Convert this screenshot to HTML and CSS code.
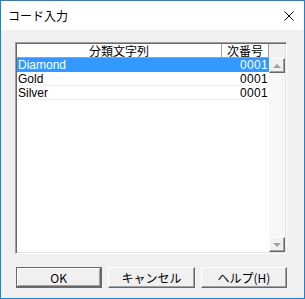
FILE: index.html
```html
<!DOCTYPE html>
<html lang="ja">
<head>
    <meta charset="UTF-8">
    <title>コード入力</title>
    <link rel="stylesheet" href="styles.css">
</head>
<body>
    <div class="window">
        <div class="titlebar">
            <span class="title">コード入力</span>
            <svg class="close" width="10" height="10" viewBox="0 0 10 10">
                <path d="M0.5 0.5 L9.5 9.5 M9.5 0.5 L0.5 9.5" stroke="#000" stroke-width="1" fill="none"/>
            </svg>
        </div>
        <div class="content">
            <div class="listbox">
                <div class="header">
                    <div class="col-name">分類文字列</div>
                    <div class="col-num">次番号</div>
                    <div class="col-rest"></div>
                </div>
                <div class="body">
                    <div class="rows">
                        <div class="row selected"><span>Diamond</span><span class="num">0001</span></div>
                        <div class="row"><span>Gold</span><span class="num">0001</span></div>
                        <div class="row"><span>Silver</span><span class="num">0001</span></div>
                    </div>
                    <div class="scrollbar">
                        <div class="sb-btn"><span class="arrow up"></span></div>
                        <div class="sb-track"></div>
                        <div class="sb-btn"><span class="arrow down"></span></div>
                    </div>
                </div>
            </div>
            <div class="buttons">
                <button class="btn default">OK</button>
                <button class="btn">キャンセル</button>
                <button class="btn">ヘルプ(H)</button>
            </div>
        </div>
    </div>
</body>
</html>
```

FILE: styles.css
```css
* {
    margin: 0;
    padding: 0;
    box-sizing: border-box;
}

body {
    width: 305px;
    height: 299px;
    font-family: "Liberation Sans", "Noto Sans CJK JP", sans-serif;
    font-size: 12px;
    color: #000;
    overflow: hidden;
}

.window {
    width: 305px;
    height: 299px;
    border: 1px solid #1883d7;
    display: flex;
    flex-direction: column;
}

.titlebar {
    height: 29px;
    background: #fff;
    display: flex;
    align-items: center;
    justify-content: space-between;
    padding: 0 10px 0 7px;
}

.title {
    font-family: "Noto Sans CJK JP", sans-serif;
    font-size: 12px;
}

.close {
    display: block;
}

.content {
    flex: 1;
    background: #f0f0f0;
    padding: 12px 17px 0 14px;
}

/* list view */
.listbox {
    height: 212px;
    border: 1px solid;
    border-color: #a0a0a0 #fff #fff #a0a0a0;
    box-shadow: inset 1px 1px 0 #696969, inset -1px -1px 0 #e3e3e3;
    padding: 1px;
    display: flex;
    flex-direction: column;
    background: #fff;
}

.header {
    display: flex;
    height: 14px;
    line-height: 13px;
    font-family: "Noto Sans CJK JP", sans-serif;
    background: #fff;
}

.col-name {
    width: 205px;
    text-align: center;
    border-right: 1px solid #a0a0a0;
    border-bottom: 1px solid #a0a0a0;
}

.col-num {
    width: 47px;
    text-align: center;
    border-right: 1px solid #a0a0a0;
    border-bottom: 1px solid #a0a0a0;
}

.col-rest {
    flex: 1;
    background: #f0f0f0;
}

.body {
    flex: 1;
    display: flex;
}

.rows {
    flex: 1;
    background-color: #fff;
    background-image: radial-gradient(circle, #e8e8e8 0.5px, transparent 0.7px);
    background-size: 4px 4px;
    background-position: 1px 1px;
}

.row {
    display: flex;
    justify-content: space-between;
    height: 14px;
    line-height: 14px;
    padding: 0 1px 0 1px;
    background: #fff;
    border-bottom: 1px solid #f0f0f0;
}

.row.selected {
    background: #3399ff;
    color: #fff;
    border-bottom-color: #3399ff;
}

.num {
    letter-spacing: 0.3px;
}

/* scrollbar */
.scrollbar {
    width: 16px;
    display: flex;
    flex-direction: column;
}

.sb-track {
    flex: 1;
    background-image: conic-gradient(#fff 25%, #f0f0f0 0 50%, #fff 0 75%, #f0f0f0 0);
    background-size: 2px 2px;
}

.sb-btn {
    height: 15px;
    background: #f0f0f0;
    border: 1px solid;
    border-color: #fff #696969 #696969 #fff;
    box-shadow: inset -1px -1px 0 #a0a0a0;
    display: flex;
    align-items: center;
    justify-content: center;
}

.arrow {
    width: 0;
    height: 0;
    border-left: 4px solid transparent;
    border-right: 4px solid transparent;
}

.arrow.up {
    border-bottom: 4px solid #a0a0a0;
}

.arrow.down {
    border-top: 4px solid #a0a0a0;
}

/* buttons */
.buttons {
    display: flex;
    gap: 6px;
    margin-top: 13px;
    padding-left: 1px;
}

.btn {
    width: 87px;
    height: 21px;
    font-family: "Noto Sans CJK JP", sans-serif;
    font-size: 12px;
    color: #000;
    background: #f0f0f0;
    border: 1px solid;
    border-color: #fff #696969 #696969 #fff;
    box-shadow: inset -1px -1px 0 #a0a0a0;
}

.btn.default {
    border: 1px solid #696969;
    border-bottom-width: 2px;
    border-right-width: 2px;
    box-shadow: inset 1px 1px 0 #fff, inset -1px -1px 0 #a0a0a0;
}
```
